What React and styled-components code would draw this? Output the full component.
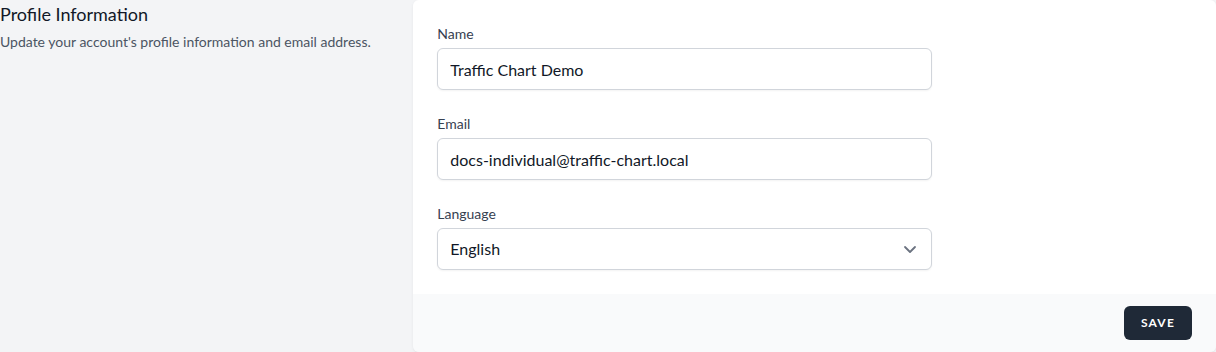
import React from "react";
import styled, { createGlobalStyle } from "styled-components";

const Global = createGlobalStyle`
  html, body { margin: 0; padding: 0; background: #f3f4f6; }
  body { font-family: "Lato", "Noto Sans", sans-serif; -webkit-font-smoothing: antialiased; }
  * { box-sizing: border-box; }
`;

const Section = styled.div`
  display: grid;
  grid-template-columns: repeat(3, 1fr);
  column-gap: 24px;
  width: 1216px;
  height: 352px;
`;

const Aside = styled.div``;

const Title = styled.h3`
  margin: 0;
  font-size: 18px;
  line-height: 28px;
  font-weight: 400;
  color: #111827;
`;

const Desc = styled.p`
  margin: 4px 0 0;
  font-size: 14px;
  line-height: 20px;
  color: #4b5563;
`;

const Card = styled.div`
  grid-column: span 2;
  display: flex;
  flex-direction: column;
  box-shadow: 0 1px 3px 0 rgba(0,0,0,0.06), 0 1px 2px -1px rgba(0,0,0,0.06);
  border-radius: 6px;
  overflow: hidden;
`;

const Body = styled.div`
  background: #fff;
  padding: 24px;
  display: grid;
  grid-template-columns: repeat(6, 1fr);
  gap: 24px;
`;

const Field = styled.div`
  grid-column: span 4;
`;

const Label = styled.label`
  display: block;
  font-size: 14px;
  line-height: 20px;
  font-weight: 400;
  color: #374151;
`;

const Input = styled.input`
  display: block;
  width: 100%;
  margin-top: 4px;
  height: 42px;
  padding: 8px 12px;
  border: 1px solid #d1d5db;
  border-radius: 6px;
  box-shadow: 0 1px 2px 0 rgba(0,0,0,0.05);
  font-family: inherit;
  font-size: 16px;
  line-height: 24px;
  color: #111827;
  background: #fff;
  outline: none;
`;

const SelectWrap = styled.div`
  position: relative;
  margin-top: 4px;
`;

const Select = styled.div`
  display: flex;
  align-items: center;
  width: 100%;
  height: 42px;
  padding: 8px 12px;
  border: 1px solid #d1d5db;
  border-radius: 6px;
  box-shadow: 0 1px 2px 0 rgba(0,0,0,0.05);
  font-size: 16px;
  line-height: 24px;
  color: #111827;
  background: #fff;
`;

const Chevron = styled.svg`
  position: absolute;
  right: 10px;
  top: 50%;
  transform: translateY(-50%);
`;

const Footer = styled.div`
  flex: 1;
  display: flex;
  align-items: center;
  justify-content: flex-end;
  padding: 12px 24px;
  background: #f9fafb;
`;

const Button = styled.button`
  display: inline-flex;
  align-items: center;
  padding: 8px 16px;
  background: #1f2937;
  border: 1px solid transparent;
  border-radius: 6px;
  font-family: inherit;
  font-weight: 700;
  font-size: 12px;
  line-height: 16px;
  color: #fff;
  text-transform: uppercase;
  letter-spacing: 0.1em;
  cursor: pointer;
`;

export default function App() {
  return (
    <>
      <Global />
      <Section>
        <Aside>
          <Title>Profile Information</Title>
          <Desc>Update your account's profile information and email address.</Desc>
        </Aside>
        <Card>
          <Body>
            <Field>
              <Label>Name</Label>
              <Input defaultValue="Traffic Chart Demo" />
            </Field>
            <Field>
              <Label>Email</Label>
              <Input defaultValue="docs-individual@traffic-chart.local" />
            </Field>
            <Field>
              <Label>Language</Label>
              <SelectWrap>
                <Select>English</Select>
                <Chevron width="24" height="24" viewBox="0 0 24 24" fill="none">
                  <path d="M7 10l5 5 5-5" stroke="#6b7280" strokeWidth="1.8" strokeLinecap="round" strokeLinejoin="round" />
                </Chevron>
              </SelectWrap>
            </Field>
          </Body>
          <Footer>
            <Button>Save</Button>
          </Footer>
        </Card>
      </Section>
    </>
  );
}
